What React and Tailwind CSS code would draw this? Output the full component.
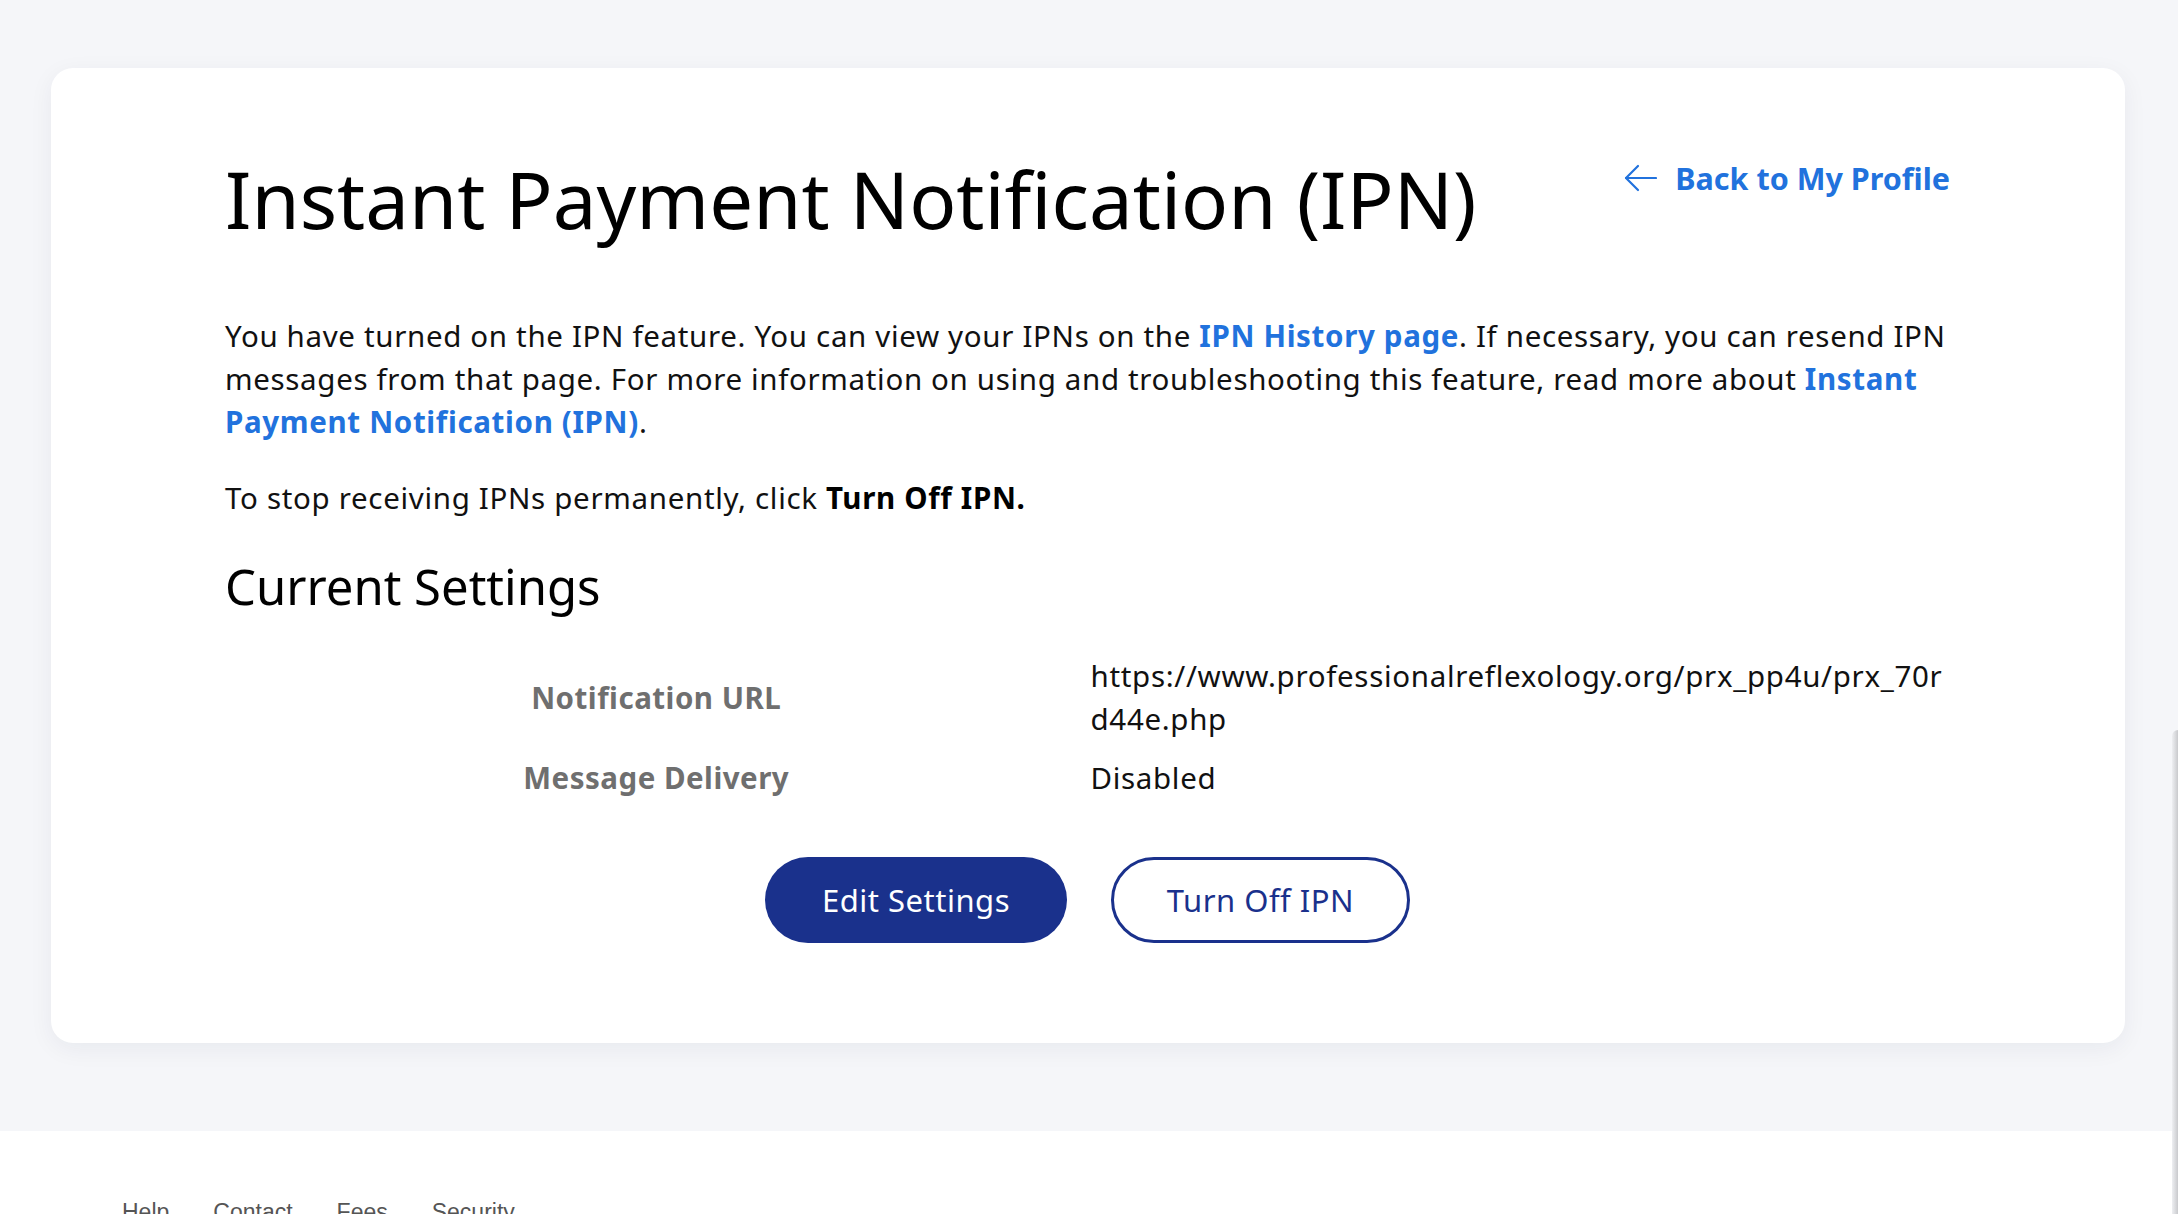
import React from "react";

function ArrowLeft() {
  return (
    <svg width="33" height="28" viewBox="0 0 33 28" fill="none" className="shrink-0">
      <path d="M32 14H2" stroke="#2172dd" strokeWidth="2.2" strokeLinecap="round" />
      <path d="M14 2L2 14L14 26" stroke="#2172dd" strokeWidth="2.2" strokeLinecap="round" strokeLinejoin="round" />
    </svg>
  );
}

export default function App() {
  return (
    <div className="relative min-h-screen overflow-hidden bg-[#f5f6f9] font-['Noto_Sans',sans-serif]">
      <main className="pt-[68px] pl-[51px] pr-[53px] pb-[88px]">
        <section className="rounded-[22px] bg-white pt-[84px] pb-[100px] pl-[174px] pr-[175px] shadow-[0_6px_24px_rgba(20,30,60,0.06)]">
          <div className="flex items-start justify-between">
            <h1 className="text-[78px] leading-[94px] font-normal text-black">
              Instant Payment Notification (IPN)
            </h1>
            <a href="#" className="mt-[6px] flex items-center gap-[18px] text-[30.5px] leading-[40px] font-bold text-[#2172dd]">
              <ArrowLeft />
              <span>Back to My Profile</span>
            </a>
          </div>

          <p className="mt-[68px] text-[29.5px] leading-[43px] tracking-[0.66px] text-[#111]">
            You have turned on the IPN feature. You can view your IPNs on the{" "}
            <a href="#" className="font-bold text-[#2172dd]">IPN History page</a>. If necessary, you can resend IPN
            messages from that page. For more information on using and troubleshooting this feature, read more about{" "}
            <a href="#" className="font-bold text-[#2172dd]">Instant Payment Notification (IPN)</a>.
          </p>

          <p className="mt-[33px] text-[29.5px] leading-[43px] tracking-[0.68px] text-[#111]">
            To stop receiving IPNs permanently, click <strong className="font-bold text-black">Turn Off IPN.</strong>
          </p>

          <h2 className="mt-[37px] text-[49px] leading-[60px] font-normal text-black">Current Settings</h2>

          <dl className="mt-[38px] grid grid-cols-2 gap-y-[16px] text-[29.5px] leading-[43px]">
            <dt className="flex items-center justify-center font-bold tracking-[0.5px] text-[#6f6f6f]">Notification URL</dt>
            <dd className="break-all pl-[3px] tracking-[0.68px] text-[#111]">
              https://www.professionalreflexology.org/prx_pp4u/prx_70r<br />d44e.php
            </dd>
            <dt className="flex items-center justify-center font-bold tracking-[0.5px] text-[#6f6f6f]">Message Delivery</dt>
            <dd className="pl-[3px] tracking-[0.68px] text-[#111]">Disabled</dd>
          </dl>

          <div className="mt-[58px] flex justify-center gap-[44px]">
            <button className="flex h-[86px] w-[302px] items-center justify-center rounded-full bg-[#1a318c] text-[31px] tracking-[0.5px] text-white">
              Edit Settings
            </button>
            <button className="flex h-[86px] w-[299px] items-center justify-center rounded-full border-[3px] border-[#1a318c] bg-white text-[31px] tracking-[0.5px] text-[#1a318c]">
              Turn Off IPN
            </button>
          </div>
        </section>
      </main>

      <footer className="h-[200px] bg-white pt-[68px] pl-[122px]">
        <nav className="flex gap-[44px] font-['Liberation_Sans',Arial,sans-serif] text-[23px] leading-[26px] text-[#555]">
          <a href="#">Help</a>
          <a href="#">Contact</a>
          <a href="#">Fees</a>
          <a href="#">Security</a>
        </nav>
      </footer>

      <div className="absolute right-0 top-[730px] h-[520px] w-[6px] rounded-tl-[6px] bg-gradient-to-r from-[#eeeff2] to-[#c9cacd]" />
    </div>
  );
}
